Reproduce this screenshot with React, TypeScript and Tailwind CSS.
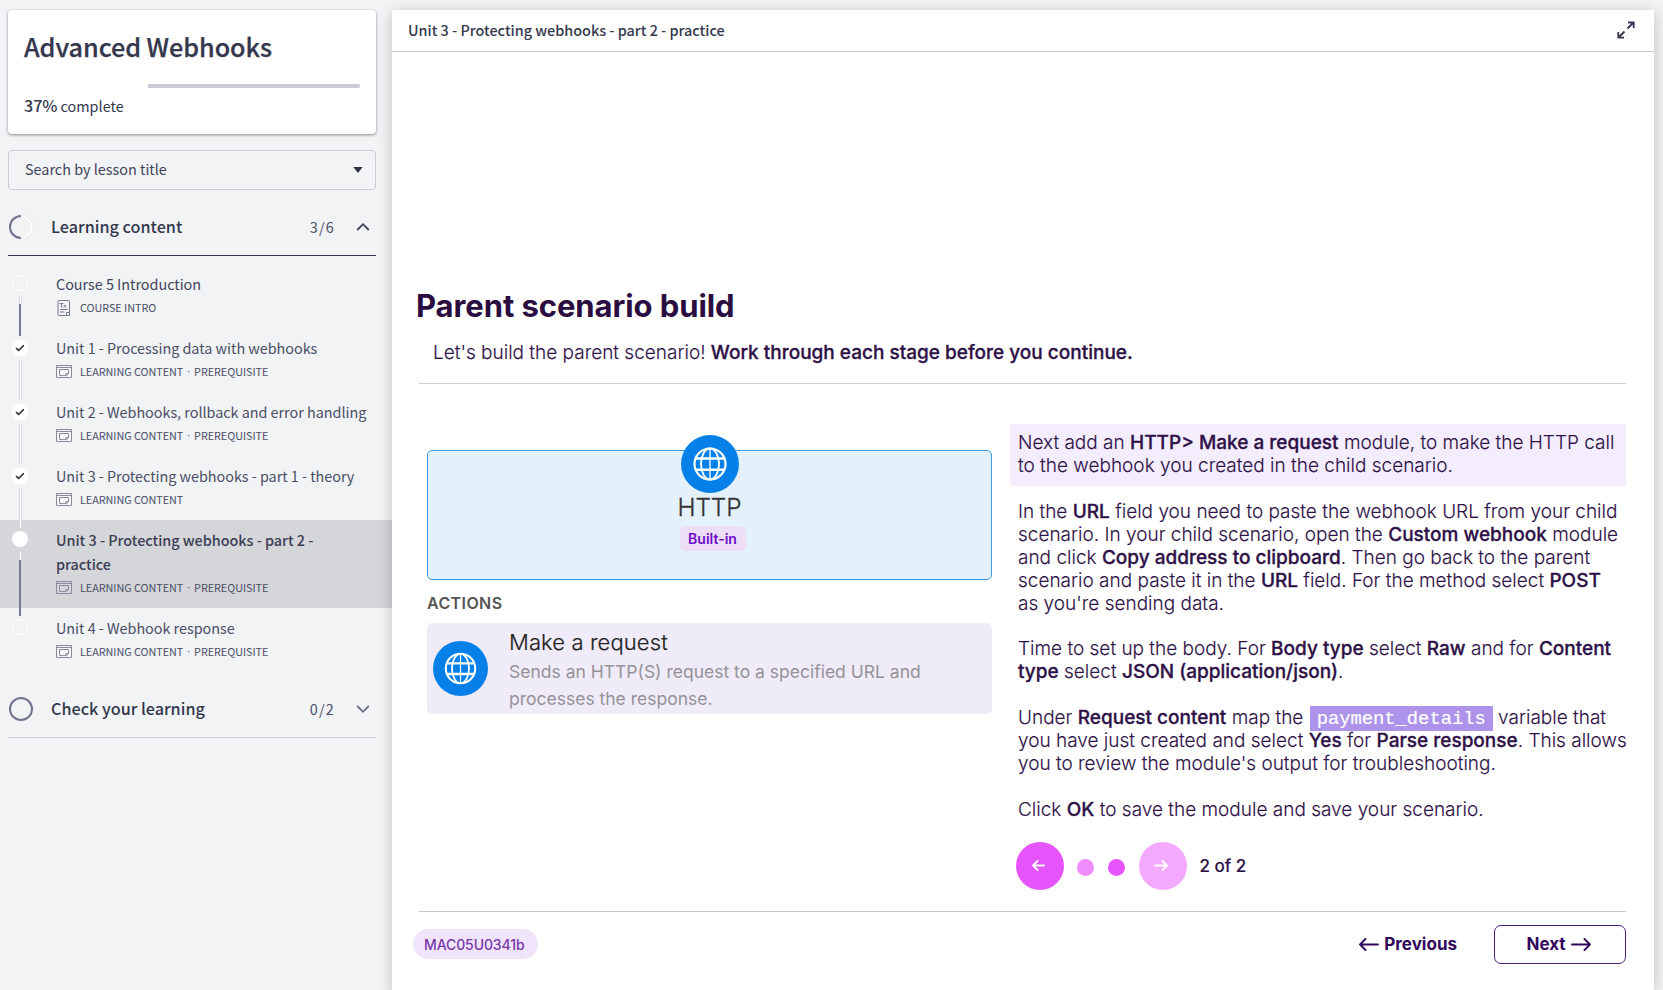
import React from "react";

type Marker = "empty" | "check" | "current";
type Lesson = {
  title: string;
  tags: string[];
  marker: Marker;
  tone: string;
  doc?: boolean;
  link?: "light" | "dark";
};

const lessons: Lesson[] = [
  { title: "Course 5 Introduction", tags: ["COURSE INTRO"], marker: "empty", tone: "text-[#41445c]", doc: true, link: "dark" },
  { title: "Unit 1 - Processing data with webhooks", tags: ["LEARNING CONTENT", "PREREQUISITE"], marker: "check", tone: "text-[#4b4e66]", link: "light" },
  { title: "Unit 2 - Webhooks, rollback and error handling", tags: ["LEARNING CONTENT", "PREREQUISITE"], marker: "check", tone: "text-[#4b4e66]", link: "light" },
  { title: "Unit 3 - Protecting webhooks - part 1 - theory", tags: ["LEARNING CONTENT"], marker: "check", tone: "text-[#4b4e66]", link: "light" },
  { title: "Unit 3 - Protecting webhooks - part 2 - practice", tags: ["LEARNING CONTENT", "PREREQUISITE"], marker: "current", tone: "font-medium text-[#3b3d54]", link: "dark" },
  { title: "Unit 4 - Webhook response", tags: ["LEARNING CONTENT", "PREREQUISITE"], marker: "empty", tone: "text-[#4b4e66]" },
];

function DocIcon() {
  return (
    <svg width="16" height="16" viewBox="0 0 16 16" fill="none" stroke="#777a8e" strokeWidth="1">
      <path d="M3 .5h9.500a1 1 0 0 1 1 1v14H3a1 1 0 0 1-1-1v-13a1 1 0 0 1 1-1zM10.500 15.500v-3h3M3.500 3.500h4M5.500 3.500v4M7.500 5l2.500 2.500M10 5L7.500 7.500M4 9.500h7.500M4 12h4.500" />
    </svg>
  );
}

function ModuleIcon() {
  return (
    <svg width="16" height="13" viewBox="0 0 16 13" fill="none" stroke="#8a8c9d" strokeWidth="1">
      <path d="M.5.5h15v12H.5zM.5 2.500h15M3.500 4.500h9v4l-2 2h-7zM10 10.500V8.500h2.500" />
    </svg>
  );
}

function MarkerDot({ kind }: { kind: Marker }) {
  if (kind === "empty") return <div className="-mt-px mb-px size-4 shrink-0 rounded-full border border-white" />;
  if (kind === "current") return <div className="-mt-px mb-px size-4 shrink-0 rounded-full bg-white" />;
  return (
    <div className="flex size-4 shrink-0 items-center justify-center rounded-full bg-white">
      <svg width="10" height="8" viewBox="0 0 10 8" fill="none" stroke="#1d1d26" strokeWidth="1.500">
        <path d="M1 4l2.600 2.500L8.800 1.200" />
      </svg>
    </div>
  );
}

function Connector({ kind, tall }: { kind: "light" | "dark"; tall?: boolean }) {
  return (
    <div className={`mt-1 ml-[7px] flex w-[3px] shrink-0 flex-col ${tall ? "h-16" : "h-10"}`}>
      <div className={`w-[3px] border-x border-[#d6d8dd] bg-white ${kind === "dark" ? "h-2" : "h-10"}`} />
      {kind === "dark" && <div className="w-[2px] flex-1 bg-[#767a91]" />}
    </div>
  );
}

function Chevron({ up }: { up?: boolean }) {
  return (
    <svg width="14" height="10" viewBox="0 0 14 10" fill="none" stroke={up ? "#3d4058" : "#6c6f86"} strokeWidth="1.800">
      <path d={up ? "M1.200 8L7 2.200 12.800 8" : "M1.200 2L7 7.800 12.800 2"} />
    </svg>
  );
}

function Globe({ size }: { size: number }) {
  return (
    <svg width={size} height={size} viewBox="0 0 58 58" fill="none" stroke="#fff" className="shrink-0">
      <circle cx="29" cy="29" r="29" fill="#0480e8" stroke="none" />
      <circle cx="29" cy="29" r="15.500" strokeWidth="2.200" />
      <ellipse cx="29" cy="29" rx="9" ry="15.500" strokeWidth="1.900" />
      <path d="M15 23.500h28M15 34.800h28" strokeWidth="2.400" />
      <path d="M29 13.500v31" strokeWidth="1.300" />
    </svg>
  );
}

function Arrow({ right, w, h, stroke, sw }: { right?: boolean; w: number; h: number; stroke: string; sw: number }) {
  return (
    <svg width={w} height={h} viewBox={`0 0 ${w} ${h}`} fill="none" stroke={stroke} strokeWidth={sw} strokeLinecap="round" strokeLinejoin="round">
      <path
        d={
          right
            ? `M1 ${h / 2}H${w - 1}M${w - h / 2} 1L${w - 1} ${h / 2}L${w - h / 2} ${h - 1}`
            : `M${w - 1} ${h / 2}H1M${h / 2} 1L1 ${h / 2}L${h / 2} ${h - 1}`
        }
      />
    </svg>
  );
}

const B = ({ children }: { children: React.ReactNode }) => <strong className="font-medium [-webkit-text-stroke:0.3px_#2e1147]">{children}</strong>;

function Sidebar() {
  return (
    <aside className="w-[392px] shrink-0 pt-[10px] font-['Noto_Sans_CJK_SC',sans-serif] text-[14.4px]">
      <div className="mx-2 mr-4 h-[124px] rounded-[4px] bg-white px-4 pt-5 shadow-[0_1px_3px_rgba(30,30,40,0.5)]">
        <h1 className="text-[25.2px] leading-8 font-medium tracking-[-0.05px] text-[#34374d] [-webkit-text-stroke:0.25px_#34374d]">Advanced Webhooks</h1>
        <div className="mt-[22px] flex h-1 justify-end">
          <div className="h-1 w-[212px] rounded-r-[2px] bg-[#cacbd5]" />
        </div>
        <p className="mt-[5px] leading-6 text-[#34374d]">
          <span className="text-[16.2px] font-medium tracking-[-0.1px]">37%</span> complete
        </p>
      </div>
      <div className="mx-2 mt-4 mr-4 flex h-10 items-center justify-between rounded-[4px] border border-[#c7c9d3] pr-3 pl-4 text-[#41445a]">
        <span className="-mt-[2px]">Search by lesson title</span>
        <svg width="10" height="6" viewBox="0 0 10 6" fill="#2f3247"><path d="M.3 0h9.400L5 6z" /></svg>
      </div>
      <div className="mx-2 mt-[9px] mr-4 flex h-[57px] items-center border-b border-[#34374f] pr-[6px] pb-px text-[#34374d]">
        <svg width="26" height="26" viewBox="0 0 26 26" fill="none" className="shrink-0">
          <circle cx="13" cy="13" r="11.500" stroke="#c9cbd2" strokeWidth="1.200" strokeDasharray="1.500 1" />
          <circle cx="13" cy="13" r="11" stroke="#fff" strokeWidth="1.500" />
          <path d="M13 2a11 11 0 0 0 0 22" stroke="#70738a" strokeWidth="2" />
        </svg>
        <span className="ml-[17px] -mt-px text-[16.2px] font-medium">Learning content</span>
        <span className="mr-[21px] ml-auto tracking-[1.2px] text-[#4b4e66]">3/6</span>
        <Chevron up />
      </div>
      <ul className="pt-2">
        {lessons.map((l) => (
          <li key={l.title} className={`flex pl-3 ${l.marker === "current" ? "h-[88px] bg-[#d5d6da]" : "h-16"}`}>
            <div className="z-10 flex w-4 flex-col items-start pt-3">
              <MarkerDot kind={l.marker} />
              {l.link && <Connector kind={l.link} tall={l.marker === "current"} />}
            </div>
            <div className="ml-7 w-[313px] pt-2">
              <div className={`leading-6 tracking-[-0.025px] ${l.tone}`}>{l.title}</div>
              <div className="flex h-[23px] items-center text-[10.8px] tracking-[-0.03px] text-[#4b4e66]">
                <span className="w-6">{l.doc ? <DocIcon /> : <ModuleIcon />}</span>
                {l.tags.map((t, i) => (
                  <React.Fragment key={t}>
                    {i > 0 && <span className="mx-1 font-['Open_Sans']">·</span>}
                    <span>{t}</span>
                  </React.Fragment>
                ))}
              </div>
            </div>
          </li>
        ))}
      </ul>
      <div className="mx-2 mt-[9px] mr-4 flex h-[57px] items-center border-b border-[#c9cbd2] pr-[6px] text-[#34374d]">
        <svg width="26" height="26" viewBox="0 0 26 26" fill="none" className="shrink-0">
          <circle cx="13" cy="13" r="11" stroke="#70738a" strokeWidth="2" />
        </svg>
        <span className="ml-[17px] -mt-[2px] text-[16.2px] font-medium">Check your learning</span>
        <span className="mr-[21px] ml-auto tracking-[1.2px] text-[#4b4e66]">0/2</span>
        <Chevron />
      </div>
    </aside>
  );
}

function Instructions() {
  return (
    <div className="ml-[18px] w-[616px] text-[19px] leading-[22.93px] font-light whitespace-nowrap text-[#2e1147] [-webkit-text-stroke:0.12px_#2e1147]">
      <div className="h-[62px] bg-[#f4edfd] pt-2 pl-2">
        <p>Next add an <B>HTTP&gt; Make a request</B> module, to make the HTTP call<br />to the webhook you created in the child scenario.</p>
      </div>
      <div className="flex flex-col gap-[22.93px] pt-[14.8px] pl-2">
        <p>
          In the <B>URL</B> field you need to paste the webhook URL from your child<br />
          scenario. In your child scenario, open the <B>Custom webhook</B> module<br />
          and click <B>Copy address to clipboard</B>. Then go back to the parent<br />
          scenario and paste it in the <B>URL</B> field. For the method select <B>POST</B><br />
          as you're sending data.
        </p>
        <p>
          Time to set up the body. For <B>Body type</B> select <B>Raw</B> and for <B>Content</B><br />
          <B>type</B> select <B>JSON (application/json)</B>.
        </p>
        <p>
          Under <B>Request content</B> map the{" "}
          <code className="ml-px bg-[#ad94ea] px-[7px] pt-[2px] pb-px font-['Liberation_Mono',monospace] text-[18.8px] leading-none font-normal text-white [-webkit-text-stroke:0.2px_#fff]">payment_details</code>{" "}
          variable that<br />
          you have just created and select <B>Yes</B> for <B>Parse response</B>. This allows<br />
          you to review the module's output for troubleshooting.
        </p>
        <p>Click <B>OK</B> to save the module and save your scenario.</p>
      </div>
      <div className="mt-5 ml-[5.5px] flex h-12 items-center">
        <span className="flex size-12 items-center justify-center rounded-full bg-[#e654fd] pr-[3px]"><Arrow w={13} h={11} stroke="#fff" sw={1.8} /></span>
        <span className="mt-[3px] ml-[13px] size-[17px] rounded-full bg-[#ef8bfd]" />
        <span className="mt-[3px] ml-[14px] size-[17px] rounded-full bg-[#e654fd]" />
        <span className="ml-[14px] flex size-12 items-center justify-center rounded-full bg-[#f2a9fe] pr-1"><Arrow right w={14} h={11} stroke="#fff" sw={1.8} /></span>
        <span className="mt-px ml-[13px] text-[17px] font-medium">2 of 2</span>
      </div>
    </div>
  );
}

export default function App() {
  return (
    <div className="flex h-[990px] w-[1663px] overflow-hidden bg-[#f1f3f5]">
      <Sidebar />
      <main className="z-20 mt-[10px] w-[1262px] shrink-0 bg-white font-['Inter',sans-serif] shadow-[0_3px_14px_rgba(0,0,0,0.22)]">
        <header className="flex h-[42px] items-center justify-between border-b border-[#c9cbd3] pr-[19px] pb-px pl-4">
          <span className="-mt-px font-['Noto_Sans_CJK_SC',sans-serif] text-[14.4px] font-medium text-[#34374d]">Unit 3 - Protecting webhooks - part 2 - practice</span>
          <svg width="18" height="18" viewBox="0 0 18 18" fill="none" stroke="#34374d" strokeWidth="1.800">
            <path d="M10.500 7.500L16 2M11 1.500h5.700v5.500M7.500 10.500L2 16M1.300 11v5.700H7" />
          </svg>
        </header>
        <div className="pr-7 pl-[27px]">
          <h2 className="-ml-[3px] pt-[234px] text-[31px] leading-10 font-bold tracking-[-0.08px] text-[#2a0c40]">Parent scenario build</h2>
          <p className="mt-[15px] ml-[14px] text-[19px] leading-[23px] font-light text-[#2e1147] [-webkit-text-stroke:0.12px_#2e1147]">
            Let's build the parent scenario! <B>Work through each stage before you continue.</B>
          </p>
          <hr className="mt-[19px] border-[#cdcdcd]" />
          <div className="mt-10 flex h-[487px] pl-2">
            <div className="mt-[26px] w-[565px] shrink-0">
              <div className="flex h-[130px] flex-col items-center rounded-[5px] border border-[#3d9bea] bg-[#e4f1fb]">
                <div className="-mt-4"><Globe size={58} /></div>
                <div className="-mt-px text-[24.3px] leading-[30px] font-light text-[#333] [-webkit-text-stroke:0.3px_#333]">HTTP</div>
                <div className="mt-1 ml-[6px] flex h-[25px] w-[66px] items-center justify-center rounded-[5px] bg-[#eedef5] text-[14px] font-semibold text-[#6d0acb]">Built-in</div>
              </div>
              <div className="mt-[11px] text-[16px] leading-6 font-semibold tracking-[0.4px] text-[#555]">ACTIONS</div>
              <div className="mt-2 flex h-[91px] rounded-[5px] bg-[#f0ebf8] pt-[5px] pl-[6px]">
                <div className="mt-[13px] w-[76px]"><Globe size={55} /></div>
                <div>
                  <div className="text-[22px] leading-[28px] font-light tracking-[0.1px] text-[#222] [-webkit-text-stroke:0.2px_#222]">Make a request</div>
                  <div className="mt-[2px] text-[17.5px] leading-[27px] text-[#949298]">Sends an HTTP(S) request to a specified URL and<br />processes the response.</div>
                </div>
              </div>
            </div>
            <Instructions />
          </div>
          <hr className="border-[#cfc6cd]" />
          <footer className="-ml-[6px] mt-[13px] flex h-[39px] items-center">
            <span className="-mt-px flex h-[30px] w-[125px] items-center rounded-full bg-[#f0e4fb] pl-[11px] text-[14px] font-medium tracking-[-0.1px] text-[#7838a8]">MAC05U0341b</span>
            <span className="ml-auto flex items-center gap-[5px] text-[17px] font-bold text-[#31085c]"><Arrow w={20} h={13} stroke="#31085c" sw={1.9} />Previous</span>
            <span className="ml-[37px] flex h-[39px] w-[132px] items-center justify-center gap-[5px] rounded-[7px] border border-[#4b2078] pr-[3px] text-[17px] font-bold text-[#31085c]">Next<Arrow right w={20} h={13} stroke="#31085c" sw={1.9} /></span>
          </footer>
        </div>
      </main>
    </div>
  );
}
